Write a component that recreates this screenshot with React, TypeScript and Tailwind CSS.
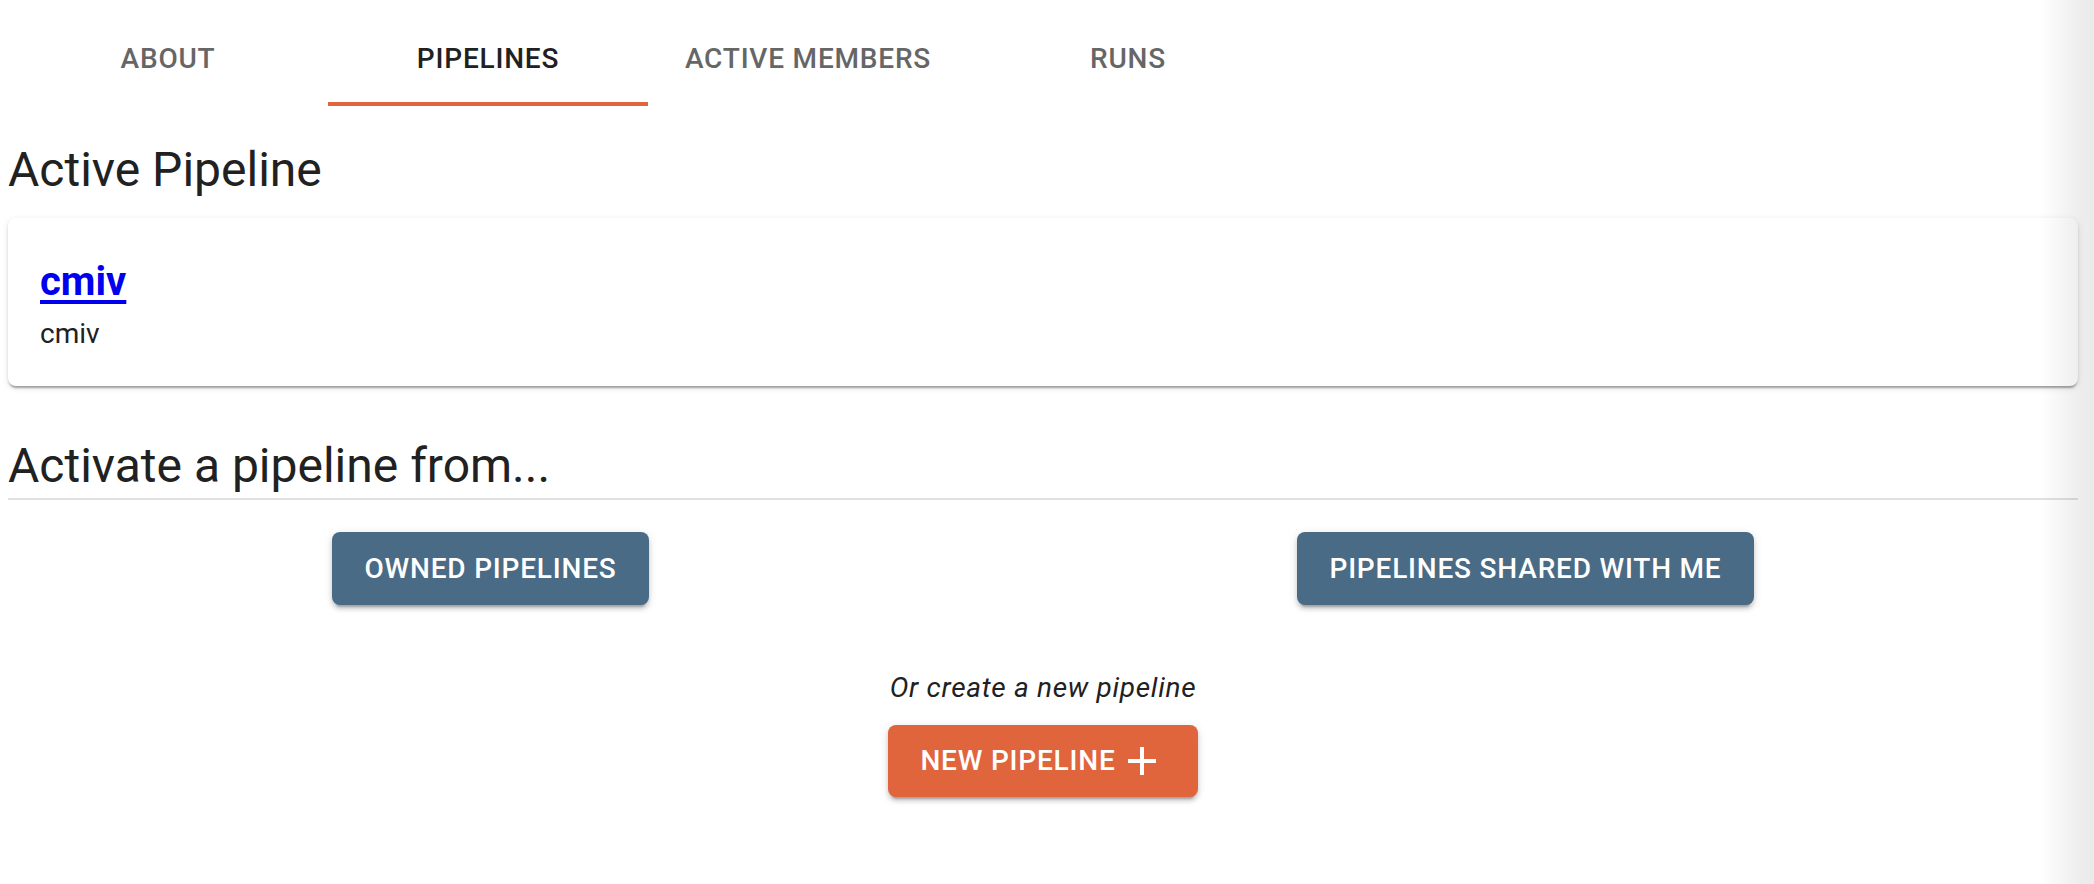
import React, { useState } from "react";

const tabs = ["About", "Pipelines", "Active Members", "Runs"];

const raised =
  "shadow-[0_6px_2px_-4px_rgba(0,0,0,0.2),0_4px_4px_0_rgba(0,0,0,0.14),0_2px_10px_0_rgba(0,0,0,0.12)]";

function AddIcon() {
  return (
    <svg viewBox="0 0 24 24" className="h-[48px] w-[48px] fill-current" aria-hidden>
      <path d="M19 13h-6v6h-2v-6H5v-2h6V5h2v6h6v2z" />
    </svg>
  );
}

export default function App() {
  const [active, setActive] = useState(1);

  return (
    <div className="relative min-h-[884px] bg-white font-['Roboto',sans-serif] text-[#212121]">
      <main className="ml-[8px] w-[2070px]">
        <nav className="flex pt-[10px]">
          {tabs.map((tab, i) => (
            <button
              key={tab}
              onClick={() => setActive(i)}
              className={`relative flex h-[96px] w-[320px] items-center justify-center text-[28px] font-medium uppercase leading-[1.25] tracking-[0.8px] ${
                i === active ? "text-[#212121]" : "text-[#666666]"
              }`}
            >
              {tab}
              {i === active && <span className="absolute inset-x-0 bottom-0 h-[4px] bg-[#e0643c]" />}
            </button>
          ))}
        </nav>

        <h2 className="mt-[32px] text-[48px] leading-[64px]">Active Pipeline</h2>

        <section className="mt-[16px] rounded-[8px] bg-white px-[32px] py-[32px] shadow-[0_4px_2px_-2px_rgba(0,0,0,0.2),0_2px_2px_0_rgba(0,0,0,0.14),0_2px_6px_0_rgba(0,0,0,0.12)]">
          <a href="#" className="block w-fit text-[40px] font-bold leading-[64px] text-[#0000ee] underline decoration-[4px] underline-offset-[5px]">
            cmiv
          </a>
          <p className="text-[28px] leading-[40px]">cmiv</p>
        </section>

        <h2 className="mt-[48px] text-[48px] leading-[64px]">Activate a pipeline from...</h2>
        <hr className="h-[2px] border-0 bg-[#e0e0e0]" />

        <div className="mt-[32px] flex justify-around">
          <button className={`rounded-[8px] bg-[#4a6b85] px-[32px] py-[12px] text-[28px] font-medium uppercase leading-[49px] tracking-[0.8px] text-white ${raised}`}>
            Owned Pipelines
          </button>
          <button className={`rounded-[8px] bg-[#4a6b85] px-[32px] py-[12px] text-[28px] font-medium uppercase leading-[49px] tracking-[0.8px] text-white ${raised}`}>
            Pipelines Shared With Me
          </button>
        </div>

        <div className="mt-[62px] flex flex-col items-center">
          <p className="text-[28px] italic leading-[42px] tracking-[0.7px]">Or create a new pipeline</p>
          <button className={`mt-[16px] flex items-center rounded-[8px] bg-[#e0643c] px-[32px] py-[12px] text-[28px] font-medium uppercase leading-[48px] tracking-[0.8px] text-white ${raised}`}>
            New Pipeline
            <span className="ml-[2px] flex">
              <AddIcon />
            </span>
          </button>
        </div>
      </main>

      <div className="pointer-events-none fixed inset-y-0 right-0 w-[54px] bg-[linear-gradient(to_right,rgba(0,0,0,0)_0%,rgba(0,0,0,0.075)_80%,rgba(0,0,0,0.08)_100%)]" />
    </div>
  );
}
